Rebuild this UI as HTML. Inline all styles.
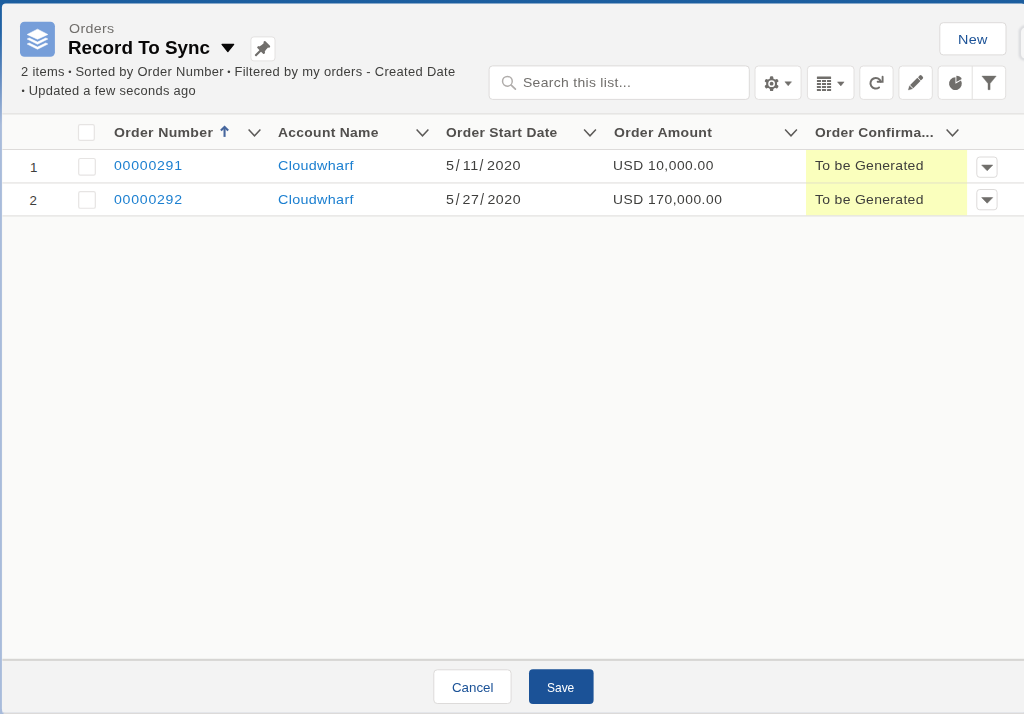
<!DOCTYPE html>
<html lang="en">
<head>
<meta charset="utf-8">
<title>Orders - Record To Sync</title>
<style>
*{box-sizing:border-box;margin:0;padding:0}
html,body{width:1024px;height:714px;overflow:hidden}
body{position:relative;font-family:"Liberation Sans",sans-serif;font-size:13.3px;color:#3e3e3c;
  background:linear-gradient(180deg,#1c5e9f 0px,#2263a5 32px,#5e88bf 75px,#a8bbdb 125px,#a8bbdb 100%)}
#shapes{position:absolute;left:0;top:0}
.t{position:absolute;white-space:nowrap;line-height:1}
.th{font-weight:bold;color:#514f4d;font-size:13.3px}
.link{color:#1b7fd0}
.cell{color:#3e3e3c}
.bu{font-size:9px;vertical-align:1.2px;margin:0 -0.4px}
.sl{font-style:normal;display:inline-block;margin:0 2.3px 0 1.1px;transform:scale(0.95,1.22);transform-origin:50% 50%}
</style>
</head>
<body>
<svg id="shapes" width="1024" height="714" viewBox="0 0 1024 714">
<rect x="1.90" y="3.50" width="1023.60" height="709.00" rx="4" fill="#f3f3f3" />
<rect x="3.5" y="712.5" width="1021" height="2" fill="#dcdad9"/>
<g transform="translate(20,21.8)"><rect x="0.00" y="0.00" width="34.90" height="35.00" rx="4.5" fill="#769ed9" /><g fill="#fff" stroke="#fff" stroke-width="0.6" stroke-linejoin="round"><path d="M17.5 7.4 L27.8 12.7 L17.5 17.4 L7.2 12.7 Z"/><path d="M7.2 17.2 L9.2 16.2 L17.5 20.3 L25.8 16.2 L27.8 17.2 L17.5 22.4 Z"/><path d="M7.2 22.2 L9.2 21.2 L17.5 25.3 L25.8 21.2 L27.8 22.2 L17.5 27.4 Z"/></g></g>
<path d="M222.0 44.4 L233.7 44.4 L227.85 51.5 Z" fill="#080707" stroke="#080707" stroke-width="1.2" stroke-linejoin="round"/>
<rect x="250.90" y="36.90" width="24.10" height="24.00" rx="3.00" fill="#fff" stroke="#e4e2e1" stroke-width="1" />
<g fill="#706e6b" transform="translate(255.3,55.9) rotate(-45)"><rect x="0" y="-1.1" width="8" height="2.2" rx="0.8"/><rect x="7.0" y="-4.9" width="2.4" height="9.8" rx="0.9"/><path d="M9 -3.9 Q12 -2.9 15.6 -3.0 L15.6 3.0 Q12 2.9 9 3.9 Z"/><rect x="15.2" y="-4.1" width="2.3" height="8.2" rx="0.9"/></g>
<rect x="939.80" y="22.70" width="66.20" height="32.20" rx="3.50" fill="#fff" stroke="#dddbda" stroke-width="1" />
<filter id="bl" x="-50%" y="-50%" width="200%" height="200%"><feGaussianBlur stdDeviation="0.9"/></filter>
<rect x="1020.2" y="26.8" width="20" height="32.6" rx="5" fill="none" stroke="#d3d4d8" stroke-width="2.4" filter="url(#bl)"/>
<rect x="1021.0" y="27.6" width="20" height="31.0" rx="4.5" fill="#f6f6f6"/>
<rect x="489.10" y="65.90" width="260.20" height="33.50" rx="3.50" fill="#fff" stroke="#dddbda" stroke-width="1" />
<g fill="none" stroke="#b0adab" stroke-linecap="round"><circle cx="507.4" cy="81.3" r="4.85" stroke-width="1.5"/><path d="M511.2 85.1 L515.4 89.2" stroke-width="1.7"/></g>
<rect x="755.00" y="66.00" width="46.10" height="33.40" rx="3.50" fill="#fff" stroke="#e2e0df" stroke-width="1" />
<rect x="807.40" y="66.00" width="46.60" height="33.40" rx="3.50" fill="#fff" stroke="#e2e0df" stroke-width="1" />
<rect x="859.80" y="66.00" width="33.30" height="33.40" rx="3.50" fill="#fff" stroke="#e2e0df" stroke-width="1" />
<rect x="898.90" y="66.00" width="33.40" height="33.40" rx="3.50" fill="#fff" stroke="#e2e0df" stroke-width="1" />
<rect x="938.10" y="66.00" width="67.60" height="33.40" rx="3.50" fill="#fff" stroke="#e2e0df" stroke-width="1" />
<rect x="971.7" y="66" width="1" height="33.4" fill="#e2e0df"/>
<g transform="translate(771.6,83.7)"><g fill="#706e6b"><rect x="-1.7" y="-7.4" width="3.4" height="4" rx="1.2" transform="rotate(0)"/><rect x="-1.7" y="-7.4" width="3.4" height="4" rx="1.2" transform="rotate(60)"/><rect x="-1.7" y="-7.4" width="3.4" height="4" rx="1.2" transform="rotate(120)"/><rect x="-1.7" y="-7.4" width="3.4" height="4" rx="1.2" transform="rotate(180)"/><rect x="-1.7" y="-7.4" width="3.4" height="4" rx="1.2" transform="rotate(240)"/><rect x="-1.7" y="-7.4" width="3.4" height="4" rx="1.2" transform="rotate(300)"/><circle r="5.5"/></g><circle r="3.4" fill="#fff"/><circle r="1.9" fill="#706e6b"/></g>
<path d="M784.9 81.8 L791.5 81.8 L788.1999999999999 85.8 Z" fill="#706e6b" stroke="#706e6b" stroke-width="0.5" stroke-linejoin="round"/>
<g fill="#706e6b"><rect x="816.9" y="76.6" width="14.2" height="2.3" rx="0.5"/><rect x="816.90" y="79.90" width="4.1" height="2.0" rx="0.3"/><rect x="821.95" y="79.90" width="4.1" height="2.0" rx="0.3"/><rect x="827.00" y="79.90" width="4.1" height="2.0" rx="0.3"/><rect x="816.90" y="83.00" width="4.1" height="2.0" rx="0.3"/><rect x="821.95" y="83.00" width="4.1" height="2.0" rx="0.3"/><rect x="827.00" y="83.00" width="4.1" height="2.0" rx="0.3"/><rect x="816.90" y="86.10" width="4.1" height="2.0" rx="0.3"/><rect x="821.95" y="86.10" width="4.1" height="2.0" rx="0.3"/><rect x="827.00" y="86.10" width="4.1" height="2.0" rx="0.3"/><rect x="816.90" y="89.10" width="4.1" height="2.0" rx="0.3"/><rect x="821.95" y="89.10" width="4.1" height="2.0" rx="0.3"/><rect x="827.00" y="89.10" width="4.1" height="2.0" rx="0.3"/></g>
<path d="M837.5 81.9 L844.1 81.9 L840.8 85.9 Z" fill="#706e6b" stroke="#706e6b" stroke-width="0.5" stroke-linejoin="round"/>
<g transform="translate(875.75,83.3)" fill="none" stroke="#706e6b" stroke-linecap="round" stroke-linejoin="round" stroke-width="2"><path d="M5.04 -1.64 A5.3 5.3 0 1 0 3.26 4.18"/><path d="M6.85 -6.5 L6.85 -1.6 L1.9 -1.6" stroke-width="1.9" stroke-linejoin="miter"/></g>
<g fill="#706e6b" transform="translate(908.3,90.0) rotate(-45)"><path d="M0 0 L3.9 -2.2 L3.9 2.2 Z" stroke="#706e6b" stroke-width="0.3" stroke-linejoin="round"/><rect x="4.8" y="-2.2" width="10.2" height="4.4"/><path d="M16.0 -2.2 L18.2 -2.2 Q19.6 -2.2 19.6 -0.8 L19.6 0.8 Q19.6 2.2 18.2 2.2 L15.5 2.2 Z"/></g>
<g fill="#706e6b"><path transform="translate(955.45,83.65)" d="M0 0 L0 -6.4 A6.4 6.4 0 1 0 5.54 -3.20 Z"/><path transform="translate(956.4,81.9)" d="M0 0 L0 -6.1 A6.1 6.1 0 0 1 5.39 -2.86 Z"/></g>
<path d="M981.9 76.1 L996.2 76.1 L990.1 83.6 L990.1 89.7 L988.0 89.7 L988.0 83.6 Z" fill="#706e6b" stroke="#706e6b" stroke-width="0.4" stroke-linejoin="round"/>
<rect x="2.4" y="113.9" width="1022" height="36" fill="#fafaf9"/>
<rect x="2.4" y="149.5" width="1022" height="66.4" fill="#fff"/>
<rect x="2.4" y="215.9" width="1022" height="444" fill="#fafaf9"/>
<rect x="806" y="150" width="161.1" height="65.4" fill="#faffbd"/>
<rect x="2.4" y="113.40" width="1022" height="1" fill="#dddbda"/>
<rect x="2.4" y="149.00" width="1022" height="1" fill="#dddbda"/>
<rect x="2.4" y="182.45" width="1022" height="1" fill="#dddbda"/>
<rect x="2.4" y="215.40" width="1022" height="1" fill="#dddbda"/>
<rect x="806" y="182.45" width="161.1" height="1" fill="#f0f3b8"/>
<rect x="78.50" y="124.60" width="15.80" height="15.80" rx="1.60" fill="#fff" stroke="#e6e4e3" stroke-width="1.2" />
<rect x="78.70" y="158.50" width="16.60" height="16.60" rx="1.60" fill="#fff" stroke="#e6e4e3" stroke-width="1.2" />
<rect x="78.70" y="191.55" width="16.60" height="16.70" rx="1.60" fill="#fff" stroke="#e6e4e3" stroke-width="1.2" />
<g fill="none" stroke="#46669d" stroke-width="2.1"><path d="M224.55 136.9 L224.55 127.5"/><path d="M220.9 130.6 L224.55 126.9 L228.2 130.6" stroke-linejoin="miter"/></g>
<path d="M248.6 129.6 L254.5 135.8 L260.4 129.6" fill="none" stroke="#5c5a58" stroke-width="1.5"/>
<path d="M416.6 129.6 L422.5 135.8 L428.4 129.6" fill="none" stroke="#5c5a58" stroke-width="1.5"/>
<path d="M584.1 129.6 L590 135.8 L595.9 129.6" fill="none" stroke="#5c5a58" stroke-width="1.5"/>
<path d="M785.1 129.6 L791 135.8 L796.9 129.6" fill="none" stroke="#5c5a58" stroke-width="1.5"/>
<path d="M946.6 129.6 L952.5 135.8 L958.4 129.6" fill="none" stroke="#5c5a58" stroke-width="1.5"/>
<rect x="976.80" y="157.00" width="20.30" height="20.30" rx="3.00" fill="#fff" stroke="#dddbda" stroke-width="1" />
<path d="M981.7 165.1 L992.7 165.1 L987.2 170.7 Z" fill="#706e6b" stroke="#706e6b" stroke-width="0.6" stroke-linejoin="round"/>
<rect x="976.80" y="189.50" width="20.30" height="20.30" rx="3.00" fill="#fff" stroke="#dddbda" stroke-width="1" />
<path d="M981.7 197.6 L992.7 197.6 L987.2 203.2 Z" fill="#706e6b" stroke="#706e6b" stroke-width="0.6" stroke-linejoin="round"/>
<rect x="2.4" y="658.9" width="1022" height="53.6" fill="#f3f3f3"/>
<rect x="2.4" y="658.8" width="1022" height="2.1" fill="#d6d5d3"/>
<rect x="433.80" y="669.80" width="77.30" height="33.70" rx="3.50" fill="#fff" stroke="#dddbda" stroke-width="1" />
<rect x="529.00" y="669.30" width="64.60" height="34.70" rx="4" fill="#1b5297" />
</svg>
<div class="t" id="t-orders" style="left:68.80px;top:22px;font-size:13px;color:#706e6b;letter-spacing:0.3px;transform-origin:0 0;transform:scaleX(1.0927)">Orders</div>
<div class="t" id="t-title" style="left:68.16px;top:37.6px;font-size:19px;font-weight:bold;color:#080707;letter-spacing:0px;transform-origin:0 0;transform:scaleX(0.9916)">Record To Sync</div>
<div class="t" id="t-meta1" style="left:20.80px;top:66px;font-size:12.5px;color:#3e3e3c;letter-spacing:0.3px;transform-origin:0 0;transform:scaleX(1.0346)">2 items <span class="bu">•</span> Sorted by Order Number <span class="bu">•</span> Filtered by my orders - Created Date</div>
<div class="t" id="t-meta2" style="left:21.60px;top:85px;font-size:12.5px;color:#3e3e3c;letter-spacing:0.3px;transform-origin:0 0;transform:scaleX(1.0297)"><span class="bu">•</span> Updated a few seconds ago</div>
<div class="t" id="t-new" style="left:957.84px;top:33px;font-size:13px;color:#1b5297;letter-spacing:0.3px;transform-origin:0 0;transform:scaleX(1.1048)">New</div>
<div class="t" id="t-search" style="left:522.88px;top:76px;font-size:13px;color:#706e6b;letter-spacing:0.3px;transform-origin:0 0;transform:scaleX(1.0708)">Search this list...</div>
<div class="t th" id="th1" style="left:114.00px;top:126px;letter-spacing:0.3px;transform-origin:0 0;transform:scaleX(1.0585)">Order Number</div>
<div class="t th" id="th2" style="left:278.00px;top:126px;letter-spacing:0.3px;transform-origin:0 0;transform:scaleX(1.0417)">Account Name</div>
<div class="t th" id="th3" style="left:446.00px;top:126px;letter-spacing:0.3px;transform-origin:0 0;transform:scaleX(1.0372)">Order Start Date</div>
<div class="t th" id="th4" style="left:613.80px;top:126px;letter-spacing:0.3px;transform-origin:0 0;transform:scaleX(1.0533)">Order Amount</div>
<div class="t th" id="th5" style="left:814.84px;top:126px;letter-spacing:0.3px;transform-origin:0 0;transform:scaleX(1.0386)">Order Confirma...</div>
<div class="t cell" id="n1" style="left:30px;top:161px">1</div>
<div class="t cell" id="n2" style="left:29.6px;top:194px">2</div>
<div class="t link" id="r1c1" style="left:114.00px;top:159px;letter-spacing:0.7px;transform-origin:0 0;transform:scaleX(1.0625)">00000291</div>
<div class="t link" id="r2c1" style="left:114.00px;top:193px;letter-spacing:0.7px;transform-origin:0 0;transform:scaleX(1.0625)">00000292</div>
<div class="t link" id="r1c2" style="left:278.00px;top:159px;letter-spacing:0.3px;transform-origin:0 0;transform:scaleX(1.0787)">Cloudwharf</div>
<div class="t link" id="r2c2" style="left:278.00px;top:193px;letter-spacing:0.3px;transform-origin:0 0;transform:scaleX(1.0787)">Cloudwharf</div>
<div class="t cell" id="r1c3" style="left:446.00px;top:159px;letter-spacing:0.5px;transform-origin:0 0;transform:scaleX(1.0810)">5<i class="sl">/</i>11<i class="sl">/</i>2020</div>
<div class="t cell" id="r2c3" style="left:446.00px;top:193px;letter-spacing:0.5px;transform-origin:0 0;transform:scaleX(1.0653)">5<i class="sl">/</i>27<i class="sl">/</i>2020</div>
<div class="t cell" id="r1c4" style="left:613.00px;top:159px;letter-spacing:0.5px;transform-origin:0 0;transform:scaleX(1.0365)">USD 10,000.00</div>
<div class="t cell" id="r2c4" style="left:613.00px;top:193px;letter-spacing:0.5px;transform-origin:0 0;transform:scaleX(1.0385)">USD 170,000.00</div>
<div class="t cell" id="r1c5" style="left:814.84px;top:159px;letter-spacing:0.3px;transform-origin:0 0;transform:scaleX(1.0505)">To be Generated</div>
<div class="t cell" id="r2c5" style="left:814.84px;top:193px;letter-spacing:0.3px;transform-origin:0 0;transform:scaleX(1.0505)">To be Generated</div>
<div class="t" id="t-cancel" style="left:451.52px;top:681px;font-size:13px;color:#1b5297;letter-spacing:0px;transform-origin:0 0;transform:scaleX(1.0252)">Cancel</div>
<div class="t" id="t-save" style="left:547.48px;top:681px;font-size:13px;color:#fff;letter-spacing:0px;transform-origin:0 0;transform:scaleX(0.9201)">Save</div>
</body>
</html>
